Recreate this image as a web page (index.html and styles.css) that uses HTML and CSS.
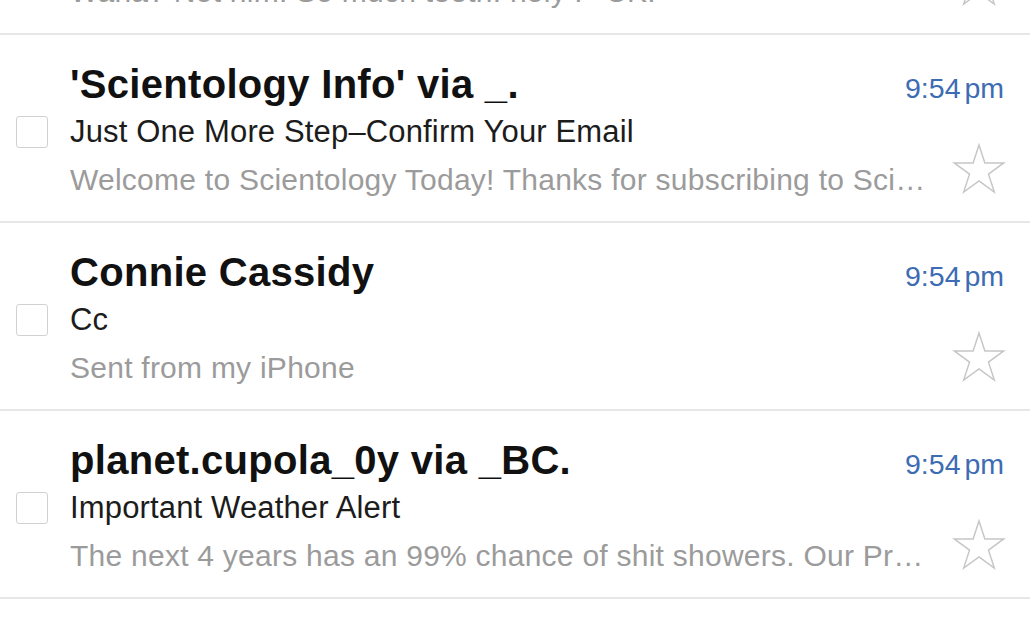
FILE: index.html
```html
<!DOCTYPE html>
<html lang="en">
<head>
  <meta charset="UTF-8">
  <title>Inbox</title>
  <link rel="stylesheet" href="styles.css">
</head>
<body>

  <ul class="inbox">
    <li class="mail">
      <div class="head"><span class="from">Anna Barrett</span><span class="time">9:55 pm</span></div>
      <span class="box"></span>
      <div class="subject">Re: him</div>
      <div class="preview">Wana? Not him. So much teeth. holy F*CK.</div>
      <svg class="star" viewBox="-1 -1 56 53"><polygon points="27,1 33.09,19.73 52.77,19.73 36.84,31.3 42.93,50.02 27,38.45 11.07,50.02 17.16,31.3 1.23,19.73 20.91,19.73"/></svg>
    </li>
    <li class="mail">
      <div class="head"><span class="from">'Scientology Info' via _.</span><span class="time">9:54 pm</span></div>
      <span class="box"></span>
      <div class="subject">Just One More Step–Confirm Your Email</div>
      <div class="preview">Welcome to Scientology Today! Thanks for subscribing to Sci…</div>
      <svg class="star" viewBox="-1 -1 56 53"><polygon points="27,1 33.09,19.73 52.77,19.73 36.84,31.3 42.93,50.02 27,38.45 11.07,50.02 17.16,31.3 1.23,19.73 20.91,19.73"/></svg>
    </li>
    <li class="mail">
      <div class="head"><span class="from">Connie Cassidy</span><span class="time">9:54 pm</span></div>
      <span class="box"></span>
      <div class="subject">Cc</div>
      <div class="preview">Sent from my iPhone</div>
      <svg class="star" viewBox="-1 -1 56 53"><polygon points="27,1 33.09,19.73 52.77,19.73 36.84,31.3 42.93,50.02 27,38.45 11.07,50.02 17.16,31.3 1.23,19.73 20.91,19.73"/></svg>
    </li>
    <li class="mail">
      <div class="head"><span class="from">planet.cupola_0y via _BC.</span><span class="time">9:54 pm</span></div>
      <span class="box"></span>
      <div class="subject">Important Weather Alert</div>
      <div class="preview">The next 4 years has an 99% chance of shit showers. Our Pr…</div>
      <svg class="star" viewBox="-1 -1 56 53"><polygon points="27,1 33.09,19.73 52.77,19.73 36.84,31.3 42.93,50.02 27,38.45 11.07,50.02 17.16,31.3 1.23,19.73 20.91,19.73"/></svg>
    </li>
  </ul>

</body>
</html>
```

FILE: styles.css
```css
html, body {
  margin: 0;
  height: 100%;
  overflow: hidden;
  background: #fff;
}
body {
  font-family: "Liberation Sans", "Helvetica Neue", Arial, sans-serif;
}
/* list is scrolled: the first row is mostly above the window */
.inbox {
  list-style: none;
  margin: -153px 0 0 0;
  padding: 0;
}
.mail {
  display: grid;
  grid-template-columns: 70px 1fr 80px;
  grid-template-rows: 48px 48px 47px;
  box-sizing: border-box;
  height: 188px;
  padding: 25px 25px 18px 0;
  border-bottom: 2px solid #e6e6e6;
}
.head {
  grid-column: 2 / 4;
  grid-row: 1;
  display: flex;
  justify-content: space-between;
  align-items: baseline;
  line-height: 48px;
}
.from {
  font-size: 40px;
  font-weight: bold;
  letter-spacing: 0.3px;
  color: #111;
}
.time {
  font-size: 28.5px;
  color: #3d6cb3;
  word-spacing: -4px;
  margin-right: 1px;
}
.box {
  grid-column: 1;
  grid-row: 2;
  width: 30px;
  height: 30px;
  margin: 8px 0 0 16px;
  border: 1.5px solid #d2d2d2;
  border-radius: 3px;
}
.subject {
  grid-column: 2;
  grid-row: 2;
  font-size: 31px;
  letter-spacing: 0.15px;
  line-height: 48px;
  color: #1c1c1c;
  white-space: nowrap;
}
.preview {
  grid-column: 2;
  grid-row: 3;
  font-size: 30px;
  letter-spacing: 0.25px;
  line-height: 47px;
  color: #9b9b9b;
  white-space: nowrap;
  overflow: hidden;
}
.star {
  grid-column: 3;
  grid-row: 2 / 4;
  justify-self: end;
  width: 54px;
  height: 51px;
  margin: 35px -1px 0 0;
  fill: none;
  stroke: #c6c6c6;
  stroke-width: 1.5;
}
```
